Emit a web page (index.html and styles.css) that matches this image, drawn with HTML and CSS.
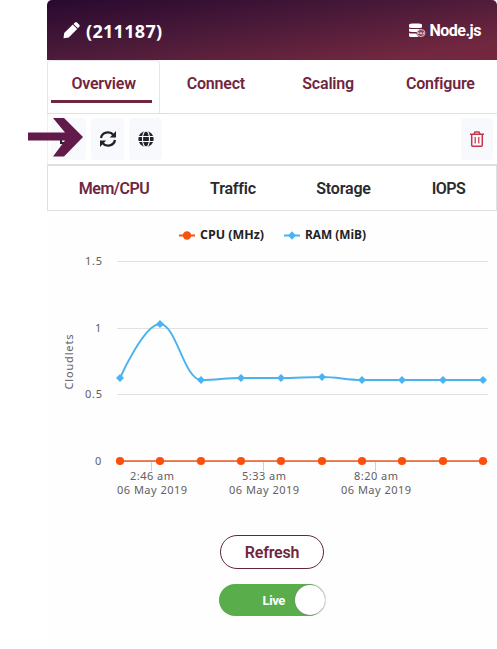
FILE: index.html
```html
<!DOCTYPE html>
<html lang="en">
<head>
<meta charset="utf-8">
<title>Node.js (211187)</title>
<link rel="stylesheet" href="styles.css">
</head>
<body>
<main class="card">
  <header class="header">
    <div class="node-name">
      <svg width="17" height="17" viewBox="0 0 17 17" fill="#fff"><path d="M0.500 16.300 1.200 11 9.800 2.600l4.400 4.400-8.500 8.500zM10.500 1.900 12 .5q1-.8 2 0l2.300 2.300q.8 1 0 2l-1.400 1.500z"/></svg>
      <span>(211187)</span>
    </div>
    <div class="stack">
      <svg width="17" height="16" viewBox="0 0 17 16"><g fill="#fff"><path d="M0 2Q0 .5 3 .5h7q3 0 3 1.500v2q0 1-2 1H3Q0 5 0 4z"/><path d="M0 5.500q1 .5 3 .5h8L8 9H3Q0 9 0 8zM0 10q1 .5 3 .5h4l2.500 3.500H3q-3 0-3-1.500z"/></g><ellipse cx="12" cy="10" rx="4" ry="3.500" fill="#863f59" stroke="#e0bdc8"/><path d="M9.500 11V9.200l2 1.800V9.200m1 0V11h2V9.200" fill="none" stroke="#f5dfe6" stroke-width=".7"/></svg>
      <span>Node.js</span>
    </div>
  </header>
  <nav class="tabs">
    <a class="tab active"><span>Overview</span></a>
    <a class="tab"><span>Connect</span></a>
    <a class="tab"><span>Scaling</span></a>
    <a class="tab"><span>Configure</span></a>
  </nav>
  <div class="toolbar">
    <button class="tool first" aria-label="Console"><svg width="18" height="16" viewBox="0 0 18 16" fill="none" stroke="#202329" stroke-width="2"><path d="M10 3H1v3M1 9v3h10"/></svg></button>
    <button class="tool" aria-label="Restart"><svg width="18" height="18" viewBox="0 0 18 18" fill="none" stroke="#202329" stroke-width="2.300"><path d="M2 8A7 6.500 0 0 1 14.500 5M16 10A7 6.500 0 0 1 3.500 13"/><path d="M17 1V7.500h-6.200zM1 17v-6.500h6.200z" fill="#202329" stroke="none"/></svg></button>
    <button class="tool" aria-label="Open in browser"><svg width="16" height="16" viewBox="0 0 16 16"><circle cx="8" cy="8" r="7.700" fill="#202329"/><path d="M0 5.500h16M0 10.500h16" stroke="#f8f9fc" stroke-width="1.100"/><ellipse cx="8" cy="8" rx="3.500" ry="8" fill="none" stroke="#f8f9fc" stroke-width="1.100"/></svg></button>
    <button class="tool trash" aria-label="Delete"><svg width="14" height="16" viewBox="0 0 14 16" fill="none" stroke="#c83549" stroke-width="1.500"><path d="M0 3.300h14M4 3l1-2h4l1 2M1.700 3.500v10.700q0 1 1 1h8.600q1 0 1-1V3.500"/><path d="M5.200 6v6.500M8.800 6v6.500" stroke-width="1.200"/></svg></button>
    <svg class="pointer" width="55" height="40" viewBox="0 0 55 40" fill="#611a49"><path d="M0 15.500H37L25 1H36L55 20 36 39.500H25L37 23.500H0z"/></svg>
  </div>
  <nav class="metrics">
    <a class="metric m-mem"><span>Mem/CPU</span></a>
    <a class="metric m-traffic"><span>Traffic</span></a>
    <a class="metric m-storage"><span>Storage</span></a>
    <a class="metric m-iops"><span>IOPS</span></a>
  </nav>
  <svg class="chart" width="450" height="300" viewBox="47 211 450 300">
    <g class="legend">
      <path d="M179 235.500h16" stroke="#f9520f" stroke-width="2"/><circle cx="187" cy="235.500" r="4.200" fill="#f9520f"/>
      <text x="200" y="239.300" textLength="64" lengthAdjust="spacingAndGlyphs">CPU (MHz)</text>
      <path d="M284 235.500h16" stroke="#4ab3f4" stroke-width="2"/><path d="M292 231.300l4 4.200-4 4.200-4-4.200z" fill="#4ab3f4"/>
      <text x="305" y="239.300" textLength="61" lengthAdjust="spacingAndGlyphs">RAM (MiB)</text>
    </g>
    <path d="M117 261.500H488M117 328.500H488M117 394.500H488" stroke="#e1e1e2"/>
    <path d="M117 461.500H488M151.500 461v10M263.500 461v10M375.500 461v10" stroke="#ccd0e0"/>
    <g class="axis">
      <text x="85" y="265" textLength="17">1.5</text><text x="95" y="332">1</text>
      <text x="85" y="398" textLength="17">0.5</text><text x="95" y="465">0</text>
      <text x="130" y="480" textLength="44">2:46 am</text><text x="117" y="494" textLength="70">06 May 2019</text>
      <text x="242" y="480" textLength="44">5:33 am</text><text x="229" y="494" textLength="70">06 May 2019</text>
      <text x="354" y="480" textLength="44">8:20 am</text><text x="341" y="494" textLength="70">06 May 2019</text>
      <text transform="translate(73 389.500) rotate(-90)" textLength="55">Cloudlets</text>
    </g>
    <path d="M120 461H483" stroke="#e95a25" stroke-width="1.500"/>
    <g fill="#fb4f0b"><circle cx="120" cy="461" r="4.100"/><circle cx="160" cy="461" r="4.100"/><circle cx="201" cy="461" r="4.100"/><circle cx="241" cy="461" r="4.100"/><circle cx="281" cy="461" r="4.100"/><circle cx="322" cy="461" r="4.100"/><circle cx="362" cy="461" r="4.100"/><circle cx="402" cy="461" r="4.100"/><circle cx="443" cy="461" r="4.100"/><circle cx="483" cy="461" r="4.100"/></g>
    <path d="M120 378C120 378 144 324 160 324C176 324 184 379 201 380C217 380 225 378 241 378H281C297 378 306 377 322 377C338 377 346 380 362 380H483" fill="none" stroke="#4ab3ef" stroke-width="1.900"/>
    <path d="M120 374l4 4-4 4-4-4zM160 320l4 4-4 4-4-4zM201 376l4 4-4 4-4-4zM241 374l4 4-4 4-4-4zM281 374l4 4-4 4-4-4zM322 373l4 4-4 4-4-4zM362 376l4 4-4 4-4-4zM402 376l4 4-4 4-4-4zM443 376l4 4-4 4-4-4zM483 376l4 4-4 4-4-4z" fill="#4ab3f4"/>
  </svg>
  <div class="actions">
    <button class="refresh">Refresh</button>
    <div class="toggle" role="switch" aria-checked="true"><span class="live">Live</span><span class="knob"></span></div>
  </div>
</main>
</body>
</html>
```
FILE: styles.css
```css
* { box-sizing: border-box; }
body { margin: 0; background: #fff; font-family: Roboto, "Open Sans", sans-serif; overflow: hidden; }
.card { width: 450px; height: 649px; margin-left: 47px; display: flex; flex-direction: column; background: #fefefe; }
.header {
  flex: none; height: 60px; padding: 1px 16px 0 16px;
  display: flex; align-items: center; justify-content: space-between;
  border-radius: 5px 5px 0 0; color: #fff; font-weight: 700;
  background: linear-gradient(172deg, #28092f 0%, #4b1a39 45%, #70273f 85%, #74273f 100%);
}
.node-name { display: flex; align-items: center; gap: 6px; font-family: "Noto Sans", sans-serif; font-size: 18px; letter-spacing: 0.3px; }
.stack { display: flex; align-items: center; gap: 4px; font-size: 16px; letter-spacing: -0.5px; }
.tabs { flex: none; height: 54px; display: flex; border-bottom: 1px solid #dee2e6; background: #fff; }
.tab { flex: 1; display: flex; align-items: center; justify-content: center; padding: 0 1px 7px 0; font-size: 16px; font-weight: 600; letter-spacing: -0.2px; color: #70263f; }
.tab.active { padding: 0 0 7px; border: 1px solid #e4e8ed; border-bottom: 0; border-radius: 4px 4px 0 0; background: linear-gradient(#70263f, #70263f) 3px 39px / 101px 3px no-repeat; }
.toolbar { position: relative; flex: none; height: 52px; padding: 4px 4px 6px 3px; display: flex; gap: 5px; border-left: 1px solid #f0f0f0; border-bottom: 2px solid #dedfe2; background: #fff; }
.tool { border: 0; padding: 0; width: 33px; height: 42px; border-radius: 4px; background: #f8f9fc; display: flex; align-items: center; justify-content: center; }
.tool.first { width: 35px; }
.trash { margin-left: auto; width: 32px; }
.pointer { position: absolute; left: -20px; top: 3px; }
.metrics { flex: none; height: 45px; display: flex; border: 1px solid #dee0e3; border-top: 0; background: #fff; }
.metric { display: flex; align-items: center; justify-content: center; font-size: 16px; font-weight: 600; letter-spacing: -0.2px; color: #292a2d; }
.m-mem { width: 132px; color: #70263f; letter-spacing: -0.5px; }
.m-traffic { width: 106px; }
.m-storage { width: 115px; }
.m-iops { width: 95px; letter-spacing: -0.6px; }
.chart { flex: none; display: block; }
.legend text { font: 700 12px "Open Sans", sans-serif; fill: #222; }
.axis text { font: 11px "Noto Sans", sans-serif; fill: #606063; }
.actions { display: flex; flex-direction: column; align-items: center; gap: 15px; padding-top: 24px; }
.refresh { width: 104px; height: 34px; border: 1px solid #64243d; border-radius: 17px; background: #fff; color: #70263f; font: 600 16px Roboto, sans-serif; letter-spacing: -0.2px; padding: 0; }
.toggle { width: 106px; height: 32px; border-radius: 16px; background: #59ae4b; display: flex; align-items: center; justify-content: flex-end; gap: 10px; }
.live { color: #fff; font-size: 13px; font-weight: 700; letter-spacing: -0.4px; }
.knob { width: 30px; height: 30px; border-radius: 50%; background: #fff; box-shadow: 0 0 2px #777; }
```
